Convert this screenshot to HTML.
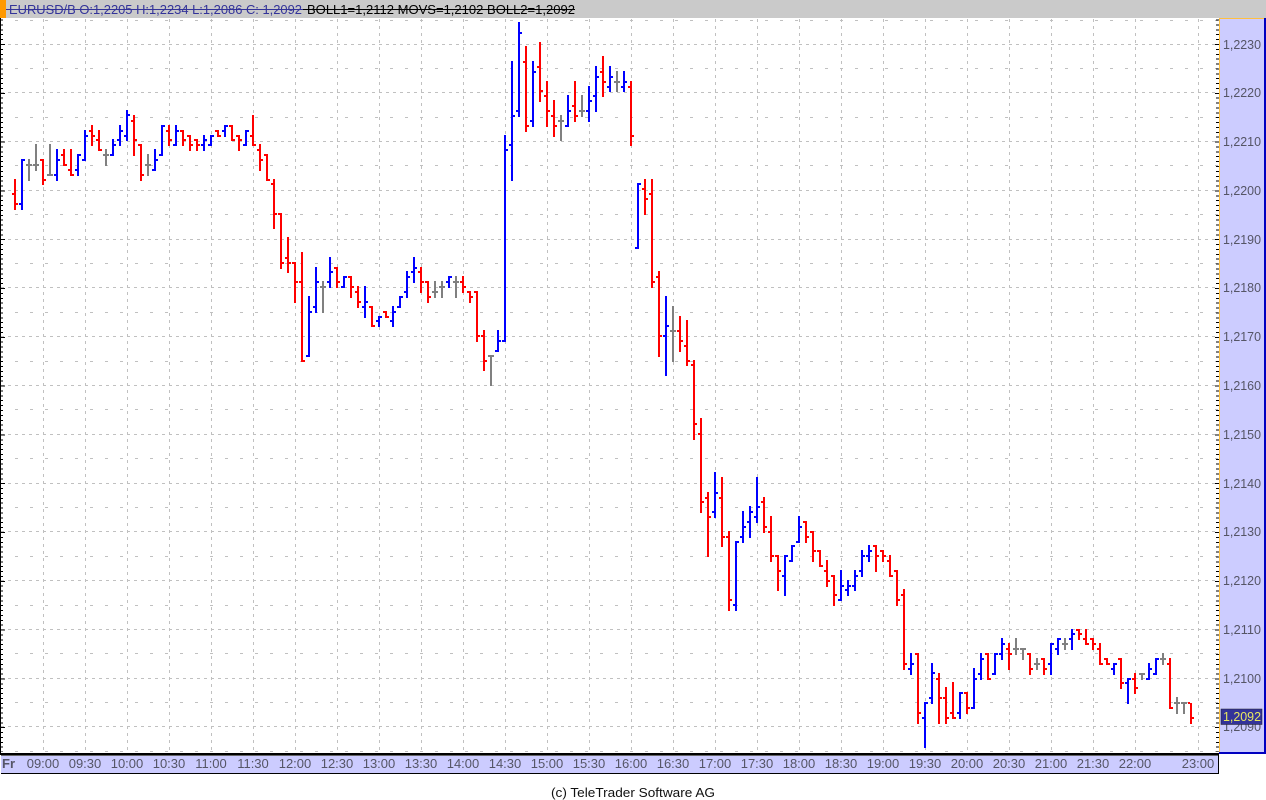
<!DOCTYPE html>
<html><head><meta charset="utf-8"><title>EURUSD/B</title>
<style>html,body{margin:0;padding:0;background:#fff;width:1266px;height:800px;overflow:hidden}svg{display:block}text{font-family:"Liberation Sans",Arial,sans-serif}</style>
</head><body>
<svg width="1266" height="800" viewBox="0 0 1266 800" xmlns="http://www.w3.org/2000/svg">
<rect width="1266" height="800" fill="#fff"/>
<g shape-rendering="crispEdges">
<!-- grid -->
<path fill="none" stroke="#c0c0c0" stroke-width="1" stroke-dasharray="3 4" d="M1 44.5H1218M1 92.5H1218M1 141.5H1218M1 190.5H1218M1 239.5H1218M1 287.5H1218M1 336.5H1218M1 385.5H1218M1 434.5H1218M1 483.5H1218M1 531.5H1218M1 580.5H1218M1 629.5H1218M1 678.5H1218M1 726.5H1218"/>
<path fill="none" stroke="#c0c0c0" stroke-width="1" stroke-dasharray="3 12" d="M15 20.5H1218M15 68.5H1218M15 117.5H1218M15 165.5H1218M15 214.5H1218M15 263.5H1218M15 312.5H1218M15 361.5H1218M15 409.5H1218M15 458.5H1218M15 507.5H1218M15 556.5H1218M15 605.5H1218M15 653.5H1218M15 702.5H1218M15 751.5H1218"/>
<path fill="none" stroke="#c0c0c0" stroke-width="1" stroke-dasharray="3 4" d="M43.5 19V753M85.5 19V753M127.5 19V753M169.5 19V753M211.5 19V753M253.5 19V753M295.5 19V753M337.5 19V753M379.5 19V753M421.5 19V753M463.5 19V753M505.5 19V753M547.5 19V753M589.5 19V753M631.5 19V753M673.5 19V753M715.5 19V753M757.5 19V753M799.5 19V753M841.5 19V753M883.5 19V753M925.5 19V753M967.5 19V753M1009.5 19V753M1051.5 19V753M1093.5 19V753M1135.5 19V753M1198.5 19V753"/>

<!-- header -->
<rect x="0" y="0" width="1266" height="18" fill="#cacaca"/>
<rect x="0" y="0" width="6" height="18" fill="#ff9900"/>

<!-- right panel -->
<rect x="1219" y="18" width="45" height="735" fill="#ccccff"/>
<rect x="1219" y="18" width="45" height="1" fill="#ffc040"/>
<rect x="1219" y="18" width="1" height="735" fill="#ffc040"/>
<rect x="1264" y="18" width="2" height="736" fill="#0000c0"/>
<rect x="1219" y="752" width="47" height="2" fill="#0000c0"/>

<!-- axis ticks -->
<rect x="0" y="18" width="1" height="735" fill="#000"/>
<line x1="1.5" y1="19.6" x2="1.5" y2="752" stroke="#000" stroke-width="3" stroke-dasharray="1 3.88"/>
<line x1="2.5" y1="44" x2="2.5" y2="752" stroke="#000" stroke-width="5" stroke-dasharray="1 47.8"/>
<line x1="1217.5" y1="19.6" x2="1217.5" y2="752" stroke="#000" stroke-width="3" stroke-dasharray="1 3.88"/>
<line x1="1217" y1="44" x2="1217" y2="752" stroke="#000" stroke-width="4" stroke-dasharray="1 47.8"/>

<!-- bottom axis -->
<rect x="1" y="755" width="1217" height="18" fill="#ccccff"/>
<rect x="0" y="753" width="1219" height="2" fill="#000"/>
<rect x="1" y="755" width="1217" height="1" fill="#666"/>
<rect x="1" y="773" width="1218" height="1" fill="#000"/>
<rect x="1218" y="753" width="1" height="21" fill="#000"/>

<!-- bars -->
<path fill="none" stroke="#ff0000" stroke-width="2" d="M15 179V210M12 194h2M16 204h2M43 159V185M40 160h2M44 180h2M64 149V166M61 155h2M65 165h2M71 149V176M68 170h2M72 175h2M92 125V146M89 131h2M93 136h2M99 130V151M96 140h2M100 150h2M134 115V156M131 121h2M135 140h2M141 144V181M138 145h2M142 175h2M169 125V146M166 131h2M170 140h2M183 130V146M180 131h2M184 140h2M190 135V151M187 136h2M191 145h2M197 139V151M194 140h2M198 145h2M218 130V137M215 131h2M219 136h2M232 125V141M229 126h2M233 140h2M239 135V151M236 136h2M240 140h2M253 115V146M250 136h2M254 145h2M260 144V171M257 150h2M261 160h2M267 154V181M264 155h2M268 180h2M274 179V229M271 184h2M275 214h2M281 213V269M278 214h2M282 263h2M288 237V273M285 258h2M289 263h2M295 262V303M292 263h2M296 282h2M302 252V362M299 282h2M303 361h2
M337 267V288M334 268h2M338 282h2M351 276V298M348 277h2M352 287h2M358 286V308M355 292h2M359 302h2M372 306V327M369 307h2M373 326h2M386 311V318M383 312h2M387 317h2M421 267V293M418 272h2M422 282h2M428 281V303M425 282h2M429 297h2M463 276V293M460 282h2M464 287h2M470 291V303M467 292h2M471 297h2M477 291V342M474 292h2M478 336h2M484 330V371M481 336h2M485 361h2
M526 46V132M523 62h2M527 126h2M540 42V102M537 67h2M541 91h2M547 81V127M544 96h2M548 111h2M554 100V137M551 116h2M555 126h2M575 81V122M572 106h2M576 116h2M603 56V97M600 72h2M604 82h2M631 81V146M628 87h2M632 136h2
M645 179V215M642 189h2M646 199h2M652 179V288M649 194h2M653 282h2M659 271V357M656 277h2M660 336h2M680 316V352M677 331h2M681 341h2M687 320V366M684 346h2M688 361h2M694 360V440M691 365h2M695 424h2M701 418V513M698 434h2M702 502h2M708 492V557M705 498h2M709 517h2M722 477V547M719 498h2M723 537h2M729 531V611M726 537h2M730 600h2
M764 497V533M761 502h2M765 527h2M771 516V562M768 532h2M772 556h2M778 555V591M775 556h2M779 571h2M806 521V543M803 522h2M807 537h2M813 531V562M810 532h2M814 551h2M820 550V567M817 551h2M821 566h2M827 560V587M824 571h2M828 581h2M834 575V606M831 576h2M835 595h2M876 545V572M873 546h2M877 556h2M883 550V562M880 551h2M884 556h2M890 555V577M887 561h2M891 576h2M897 570V606M894 571h2M898 600h2M904 589V670M901 595h2M905 664h2
M918 653V724M915 654h2M919 713h2M939 673V724M936 679h2M940 698h2M946 687V724M943 698h2M947 718h2M953 682V719M950 713h2M954 718h2M967 692V714M964 693h2M968 708h2M988 653V680M985 654h2M989 679h2M1009 643V670M1006 649h2M1010 654h2M1030 653V675M1027 654h2M1031 669h2M1044 658V675M1041 659h2M1045 669h2M1079 629V640M1076 630h2M1080 634h2M1086 629V645M1083 639h2M1087 644h2M1093 638V650M1090 639h2M1094 644h2M1100 643V665M1097 649h2M1101 664h2M1107 658V665M1104 659h2M1108 664h2M1121 658V689M1118 659h2M1122 683h2M1135 673V694M1132 679h2M1136 688h2M1170 658V709M1167 664h2M1171 708h2M1191 703V724M1188 703h2M1192 718h2"/>

<path fill="none" stroke="#0000ff" stroke-width="2" d="M22 159V210M19 204h2M23 160h2M57 149V181M54 175h2M58 160h2M78 154V176M75 170h2M79 155h2M85 130V161M82 160h2M86 136h2M113 139V156M110 155h2M114 145h2M120 125V146M117 140h2M121 131h2M127 110V141M124 136h2M128 115h2M155 149V171M152 170h2M156 160h2M162 125V156M159 155h2M163 126h2M176 125V146M173 145h2M177 131h2M211 135V146M208 145h2M212 136h2M225 125V137M222 131h2M226 126h2M246 130V146M243 145h2M247 131h2M204 135V151M201 145h2M205 140h2
M309 296V357M306 356h2M310 312h2M316 267V313M313 307h2M317 282h2M330 257V288M327 282h2M331 272h2M344 276V288M341 287h2M345 277h2M365 286V318M362 307h2M366 302h2M379 316V327M376 321h2M380 317h2M393 306V327M390 321h2M394 312h2M400 296V308M397 307h2M401 297h2M407 271V298M404 292h2M408 277h2M414 257V283M411 272h2M415 268h2M449 276V288M446 282h2M450 277h2M498 330V352M495 351h2M499 341h2M505 135V342M502 341h2M506 150h2M512 61V181M509 145h2M513 116h2M519 22V117M516 111h2M520 33h2M533 61V127M530 121h2M534 72h2M568 95V127M565 126h2M569 111h2M589 86V122M586 111h2M590 101h2M596 66V112M593 96h2M597 77h2M610 66V92M607 87h2M611 77h2M624 71V92M621 87h2M625 82h2
M638 183V249M635 248h2M639 184h2M666 296V376M663 336h2M667 326h2M715 472V518M712 512h2M716 493h2M736 541V611M733 605h2M737 542h2M743 511V543M740 537h2M744 527h2M750 506V538M747 522h2M751 512h2M757 477V523M754 517h2M758 507h2M785 555V596M782 576h2M786 556h2M792 545V562M789 561h2M793 546h2M799 516V543M796 542h2M800 527h2M841 570V601M838 600h2M842 586h2M848 580V596M845 590h2M849 586h2M855 570V591M852 586h2M856 576h2M862 550V577M859 571h2M863 556h2M869 545V562M866 556h2M870 551h2
M911 653V675M908 669h2M912 664h2M925 702V748M922 718h2M926 703h2M932 663V704M929 698h2M933 673h2M960 692V719M957 713h2M961 693h2M974 668V709M971 708h2M975 679h2M981 653V680M978 674h2M982 659h2M995 653V675M992 674h2M996 654h2M1002 638V660M999 654h2M1003 644h2M1051 643V675M1048 664h2M1052 644h2M1058 638V655M1055 649h2M1059 639h2M1072 629V650M1069 639h2M1073 634h2M1114 663V675M1111 669h2M1115 664h2M1128 678V704M1125 683h2M1129 679h2M1149 663V680M1146 679h2M1150 669h2M1156 658V675M1153 674h2M1157 659h2"/>

<path fill="none" stroke="#808080" stroke-width="2" d="M29 159V181M26 165h6M36 144V171M33 165h6M50 144V176M47 175h6M106 149V166M103 155h6M148 154V176M145 165h6M323 281V313M320 287h6M435 281V298M432 292h6M442 281V298M439 287h6M456 276V298M453 282h6M491 355V386M488 356h6M561 115V141M558 121h6M582 95V117M579 111h6M617 71V92M614 82h6M673 306V362M670 331h6M1016 638V655M1013 649h6M1023 648V660M1020 649h6M1037 658V670M1034 664h6M1065 638V650M1062 644h6M1142 673V680M1139 674h6M1163 653V665M1160 659h6M1177 697V714M1174 703h6M1184 703V714M1181 703h6"/>

<!-- header strike lines -->
<rect x="6" y="9" width="297" height="1" fill="#333399"/>
<rect x="303" y="9" width="272" height="1" fill="#000"/>
</g>

<!-- header text -->
<text x="9" y="14" font-size="13" fill="#333399" textLength="293" lengthAdjust="spacingAndGlyphs">EURUSD/B O:1,2205 H:1,2234 L:1,2086 C: 1,2092</text>
<text x="307" y="14" font-size="13" fill="#000" textLength="268" lengthAdjust="spacingAndGlyphs">BOLL1=1,2112 MOVS=1,2102 BOLL2=1,2092</text>

<!-- price labels -->
<g font-size="13" fill="#555566">
<text x="1223" y="49" textLength="38" lengthAdjust="spacingAndGlyphs">1,2230</text>
<text x="1223" y="97" textLength="38" lengthAdjust="spacingAndGlyphs">1,2220</text>
<text x="1223" y="146" textLength="38" lengthAdjust="spacingAndGlyphs">1,2210</text>
<text x="1223" y="195" textLength="38" lengthAdjust="spacingAndGlyphs">1,2200</text>
<text x="1223" y="244" textLength="38" lengthAdjust="spacingAndGlyphs">1,2190</text>
<text x="1223" y="292" textLength="38" lengthAdjust="spacingAndGlyphs">1,2180</text>
<text x="1223" y="341" textLength="38" lengthAdjust="spacingAndGlyphs">1,2170</text>
<text x="1223" y="390" textLength="38" lengthAdjust="spacingAndGlyphs">1,2160</text>
<text x="1223" y="439" textLength="38" lengthAdjust="spacingAndGlyphs">1,2150</text>
<text x="1223" y="488" textLength="38" lengthAdjust="spacingAndGlyphs">1,2140</text>
<text x="1223" y="536" textLength="38" lengthAdjust="spacingAndGlyphs">1,2130</text>
<text x="1223" y="585" textLength="38" lengthAdjust="spacingAndGlyphs">1,2120</text>
<text x="1223" y="634" textLength="38" lengthAdjust="spacingAndGlyphs">1,2110</text>
<text x="1223" y="683" textLength="38" lengthAdjust="spacingAndGlyphs">1,2100</text>
<text x="1223" y="731" textLength="38" lengthAdjust="spacingAndGlyphs">1,2090</text>
</g>

<!-- last price box -->
<rect x="1221" y="709" width="41" height="15.5" fill="#333399" stroke="#222" stroke-width="0.5"/>
<text x="1223" y="721" font-size="13" fill="#e8e860" textLength="38" lengthAdjust="spacingAndGlyphs">1,2092</text>

<!-- time labels -->
<g font-size="13" fill="#555566" text-anchor="middle">
<text x="43" y="768">09:00</text><text x="85" y="768">09:30</text><text x="127" y="768">10:00</text><text x="169" y="768">10:30</text><text x="211" y="768">11:00</text><text x="253" y="768">11:30</text><text x="295" y="768">12:00</text><text x="337" y="768">12:30</text><text x="379" y="768">13:00</text><text x="421" y="768">13:30</text><text x="463" y="768">14:00</text><text x="505" y="768">14:30</text><text x="547" y="768">15:00</text><text x="589" y="768">15:30</text><text x="631" y="768">16:00</text><text x="673" y="768">16:30</text><text x="715" y="768">17:00</text><text x="757" y="768">17:30</text><text x="799" y="768">18:00</text><text x="841" y="768">18:30</text><text x="883" y="768">19:00</text><text x="925" y="768">19:30</text><text x="967" y="768">20:00</text><text x="1009" y="768">20:30</text><text x="1051" y="768">21:00</text><text x="1093" y="768">21:30</text><text x="1135" y="768">22:00</text><text x="1198" y="768">23:00</text>
</g>
<text x="2" y="768" font-size="13" font-weight="bold" fill="#555566">Fr</text>

<!-- footer -->
<text x="551" y="797" font-size="12.5" fill="#111" textLength="164" lengthAdjust="spacingAndGlyphs">(c) TeleTrader Software AG</text>
</svg>
</body></html>
